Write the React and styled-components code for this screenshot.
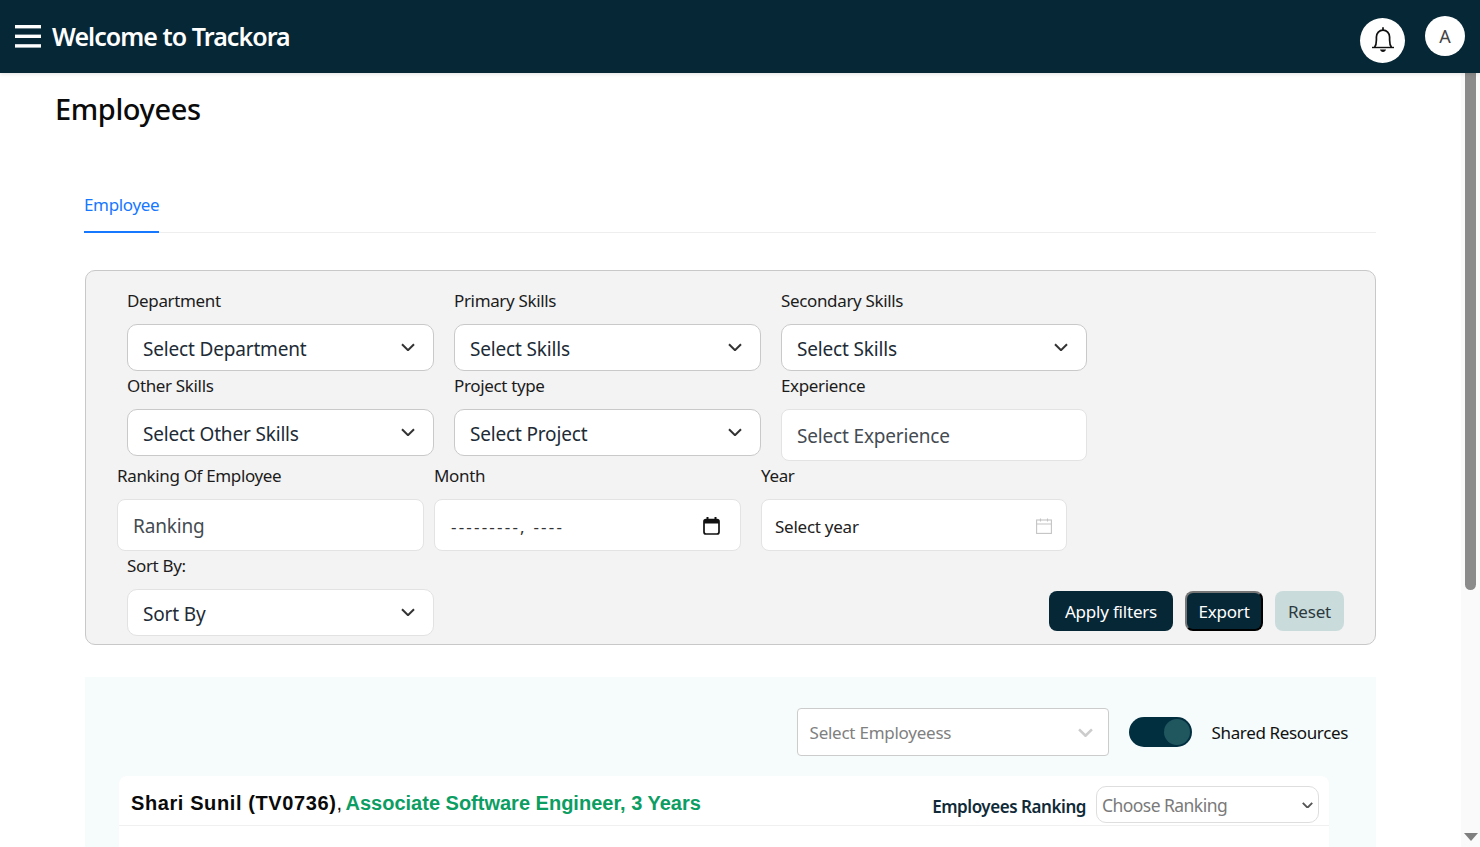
import React from 'react'
import styled, { createGlobalStyle } from 'styled-components'

const GlobalStyle = createGlobalStyle`
  * { box-sizing: border-box; }
  html, body { margin: 0; padding: 0; height: 100%; overflow: hidden; background: #fff; }
  body { font-family: "Noto Sans", "Open Sans", sans-serif; color: #111; }
`

const Page = styled.div`
  width: 1480px;
  height: 847px;
  display: flex;
  flex-direction: column;
  overflow: hidden;
`

const TopBar = styled.header`
  flex: 0 0 73px;
  display: flex;
  align-items: center;
  padding: 0 15px;
  background: #062736;
  box-shadow: 0 1px 4px rgba(0, 0, 0, 0.12);
  position: relative;
  z-index: 1;
`

const AppTitle = styled.h1`
  margin: -2px 0 0 11px;
  font-size: 25px;
  font-weight: 600;
  letter-spacing: -0.95px;
  color: #fff;
`

const BellButton = styled.div`
  width: 45px;
  height: 45px;
  margin: 7px 0 0 auto;
  border-radius: 50%;
  background: #fff;
  display: flex;
  align-items: center;
  justify-content: center;
`

const Avatar = styled.div`
  width: 40px;
  height: 40px;
  margin: -1px 0 0 20px;
  border-radius: 50%;
  background: #fff;
  color: #444;
  font-size: 18px;
  display: flex;
  align-items: center;
  justify-content: center;
`

const Body = styled.div`
  flex: 1;
  display: flex;
  min-height: 0;
`

const Main = styled.main`
  flex: 1;
  min-width: 0;
  padding-right: 85px;
`

const ScrollRail = styled.div`
  flex: 0 0 19px;
  display: flex;
  flex-direction: column;
  justify-content: space-between;
  align-items: center;
  padding-bottom: 6px;
  background: #fafafa;
`

const ScrollThumb = styled.div`
  width: 11px;
  height: 517px;
  background: #8b8b8b;
  border-radius: 0 0 6px 6px;
`

const ScrollArrow = styled.div`
  width: 0;
  height: 0;
  border-left: 7px solid transparent;
  border-right: 7px solid transparent;
  border-top: 8px solid #7f7f7f;
`

const PageTitle = styled.h2`
  margin: 0 0 0 55px;
  height: 107px;
  padding-top: 13px;
  font-size: 29px;
  line-height: 45px;
  font-weight: 500;
  letter-spacing: -0.4px;
  color: #0b0b0b;
`

const TabBar = styled.div`
  margin-left: 84px;
  height: 53px;
  display: flex;
  border-bottom: 1px solid #eeeeee;
`

const Tab = styled.div`
  height: 53px;
  padding-top: 12px;
  font-size: 17px;
  line-height: 25px;
  letter-spacing: -0.35px;
  color: #1677ff;
  border-bottom: 2px solid #1677ff;
`

const FilterPanel = styled.section`
  margin: 37px 0 0 85px;
  height: 375px;
  padding: 15px 31px 0 41px;
  background: #f3f3f3;
  border: 1px solid #c8c8c8;
  border-radius: 10px;
`

const FilterRow = styled.div`
  display: flex;
  align-items: flex-start;
  gap: 20px;
`

const Field = styled.div`
  flex: 0 0 ${p => p.$width || 307}px;
  margin-left: ${p => p.$shift || 0}px;
`

const Label = styled.div`
  height: 38px;
  padding-bottom: 8px;
  font-size: 17px;
  line-height: 30px;
  letter-spacing: -0.35px;
  color: #1c1c1c;
`

const SelectBox = styled.div`
  height: 47px;
  padding: 2px 18px 0 15px;
  display: flex;
  align-items: center;
  justify-content: space-between;
  background: #fff;
  border: 1px solid ${p => p.$soft ? '#e2e2e2' : '#c9c9c9'};
  border-radius: 10px;
  font-size: 19px;
  letter-spacing: -0.17px;
  color: #212b36;
  svg { margin-top: -3px; }
`

const InputBox = styled.div`
  height: 52px;
  padding: 2px ${p => p.$right || 15}px 0 ${p => p.$left || 15}px;
  display: flex;
  align-items: center;
  justify-content: space-between;
  background: #fff;
  border: 1px solid #e3e3e3;
  border-radius: 8px;
  font-size: ${p => p.$size || 19}px;
  letter-spacing: ${p => p.$spacing ?? -0.17}px;
  color: ${p => p.$color || '#444b52'};
`

const ButtonGroup = styled.div`
  margin: 40px 0 0 auto;
  display: flex;
  gap: 12px;
`

const ActionButton = styled.button`
  width: ${p => p.$width}px;
  height: 40px;
  padding: 0;
  background: ${p => p.$light ? '#c9dcdb' : '#062736'};
  color: ${p => p.$light ? '#2c3a40' : '#fff'};
  border: ${p => p.$outset ? '2px outset #222' : 'none'};
  border-radius: 8px;
  font-family: inherit;
  font-size: 17px;
  letter-spacing: -0.2px;
`

const EmployeePanel = styled.section`
  margin: 32px 0 0 85px;
  height: 200px;
  padding: 31px 28px 0 34px;
  background: #f6fbfb;
`

const PanelTools = styled.div`
  display: flex;
  align-items: center;
  justify-content: flex-end;
`

const EmployeeSelect = styled.div`
  width: 312px;
  height: 48px;
  padding: 0 15px 0 12px;
  display: flex;
  align-items: center;
  justify-content: space-between;
  background: #fff;
  border: 1px solid #cccccc;
  border-radius: 4px;
  font-size: 17px;
  letter-spacing: -0.25px;
  color: #808080;
`

const Toggle = styled.div`
  width: 63px;
  height: 30px;
  margin: 0 20px;
  padding: 2px;
  display: flex;
  justify-content: flex-end;
  background: #022f40;
  border-radius: 15px;
`

const ToggleKnob = styled.div`
  width: 26px;
  height: 26px;
  border-radius: 50%;
  background: #20575f;
`

const ToggleLabel = styled.span`
  font-size: 17px;
  letter-spacing: -0.36px;
  color: #111;
`

const EmployeeCard = styled.div`
  margin: 20px 19px 0 0;
  height: 100px;
  background: #fff;
  border-radius: 8px 8px 0 0;
`

const CardHeader = styled.div`
  height: 50px;
  padding: 8px 10px 0 12px;
  display: flex;
  align-items: center;
  border-bottom: 1px solid #f0f0f0;
`

const EmployeeName = styled.div`
  margin-bottom: 2px;
  font-family: "Liberation Sans", Arial, sans-serif;
  font-size: 20px;
  font-weight: 700;
  letter-spacing: 0.6px;
  color: #0a0a0a;
`

const EmployeeRole = styled.span`
  letter-spacing: 0;
  color: #0c9d63;
`

const NameComma = styled.span`
  font-weight: 400;
  letter-spacing: -1px;
`

const RankingLabel = styled.span`
  margin: 3px 10px 0 auto;
  font-size: 17px;
  font-weight: 600;
  letter-spacing: -0.45px;
  color: #0f2a38;
`

const RankingSelect = styled.div`
  width: 223px;
  height: 37px;
  padding: 1px 5px 0 5px;
  display: flex;
  align-items: center;
  justify-content: space-between;
  border: 1px solid #dedede;
  border-radius: 10px;
  font-size: 17.5px;
  letter-spacing: -0.55px;
  color: #7a7a7a;
`

const Chevron = ({ color = '#333', size = 14, width = 2 }) => (
  <svg width={size} height={size * 0.6} viewBox="0 0 14 8" fill="none">
    <path d="M1 1l6 6 6-6" stroke={color} strokeWidth={width} />
  </svg>
)

const MenuIcon = () => (
  <svg width="26" height="23" viewBox="0 0 26 23" fill="#fff">
    <rect y="0" width="26" height="3.4" />
    <rect y="9.6" width="26" height="3.4" />
    <rect y="19.2" width="26" height="3.4" />
  </svg>
)

const BellIcon = () => (
  <svg width="26" height="28" viewBox="0 0 26 28" fill="none" stroke="#111" strokeWidth="1.7">
    <path d="M2 21.5h22" strokeWidth="1.4" />
    <path d="M4.5 21.5c1.600-2.200 1.900-4.400 1.900-7.600V11c0-3.800 2.900-6.900 6.600-6.900s6.600 3.100 6.600 6.900v2.900c0 3.200.3 5.400 1.900 7.600" />
    <path d="M13 1.200v3" />
    <path d="M10 23.600h6c-.4 1.600-1.500 2.500-3 2.500s-2.600-.9-3-2.500z" fill="#111" stroke="none" />
  </svg>
)

const MonthIcon = () => (
  <svg width="17" height="18" viewBox="0 0 17 18" fill="none">
    <path d="M1 4.500C1 3.400 1.900 2.500 3 2.500h11c1.100 0 2 .9 2 2V15c0 1.100-.9 2-2 2H3c-1.100 0-2-.9-2-2z" stroke="#111" strokeWidth="1.7" />
    <path d="M1 3h15v3.600H1zM3.500 0h2v3h-2zM11.500 0h2v3h-2z" fill="#111" />
  </svg>
)

const YearIcon = () => (
  <svg width="16" height="16" viewBox="0 0 16 16" fill="none" stroke="#c4c4c4" strokeWidth="1.1">
    <rect x="0.600" y="2" width="14.800" height="13.400" />
    <path d="M0.600 6h14.800M4.500 0.500v3M11.500 0.500v3" />
  </svg>
)

const SelectField = ({ label, value, shift, soft, width }) => (
  <Field $shift={shift} $width={width}>
    <Label>{label}</Label>
    <SelectBox $soft={soft}>
      {value}
      <Chevron />
    </SelectBox>
  </Field>
)

const App = () => {
  return (
    <Page>
      <GlobalStyle />
      <TopBar>
        <MenuIcon />
        <AppTitle>Welcome to Trackora</AppTitle>
        <BellButton><BellIcon /></BellButton>
        <Avatar>A</Avatar>
      </TopBar>

      <Body>
        <Main>
          <PageTitle>Employees</PageTitle>

          <TabBar>
            <Tab>Employee</Tab>
          </TabBar>

          <FilterPanel>
            <FilterRow>
              <SelectField label="Department" value="Select Department" />
              <SelectField label="Primary Skills" value="Select Skills" />
              <SelectField label="Secondary Skills" value="Select Skills" width={306} />
            </FilterRow>

            <FilterRow>
              <SelectField label="Other Skills" value="Select Other Skills" />
              <SelectField label="Project type" value="Select Project" />
              <Field $width={306}>
                <Label>Experience</Label>
                <InputBox>Select Experience</InputBox>
              </Field>
            </FilterRow>

            <FilterRow>
              <Field $shift={-10}>
                <Label>Ranking Of Employee</Label>
                <InputBox>Ranking</InputBox>
              </Field>
              <Field $shift={-10}>
                <Label>Month</Label>
                <InputBox $left={16} $right={20} $size={17} $spacing={2.2} $color="#333">
                  ---------, ----
                  <MonthIcon />
                </InputBox>
              </Field>
              <Field $width={306}>
                <Label>Year</Label>
                <InputBox $left={13} $right={14} $size={17} $spacing={-0.25} $color="#222">
                  Select year
                  <YearIcon />
                </InputBox>
              </Field>
            </FilterRow>

            <FilterRow>
              <SelectField label="Sort By:" value="Sort By" soft />
              <ButtonGroup>
                <ActionButton $width={124}>Apply filters</ActionButton>
                <ActionButton $width={78} $outset>Export</ActionButton>
                <ActionButton $width={69} $light>Reset</ActionButton>
              </ButtonGroup>
            </FilterRow>
          </FilterPanel>

          <EmployeePanel>
            <PanelTools>
              <EmployeeSelect>
                Select Employeess
                <Chevron color="#cccccc" size={15} width={2.4} />
              </EmployeeSelect>
              <Toggle><ToggleKnob /></Toggle>
              <ToggleLabel>Shared Resources</ToggleLabel>
            </PanelTools>

            <EmployeeCard>
              <CardHeader>
                <EmployeeName>
                  Shari Sunil (TV0736)<NameComma>, </NameComma>
                  <EmployeeRole>Associate Software Engineer, 3 Years</EmployeeRole>
                </EmployeeName>
                <RankingLabel>Employees Ranking</RankingLabel>
                <RankingSelect>
                  Choose Ranking
                  <Chevron color="#555" size={11} width={2.4} />
                </RankingSelect>
              </CardHeader>
            </EmployeeCard>
          </EmployeePanel>
        </Main>

        <ScrollRail>
          <ScrollThumb />
          <ScrollArrow />
        </ScrollRail>
      </Body>
    </Page>
  )
}

export default App
